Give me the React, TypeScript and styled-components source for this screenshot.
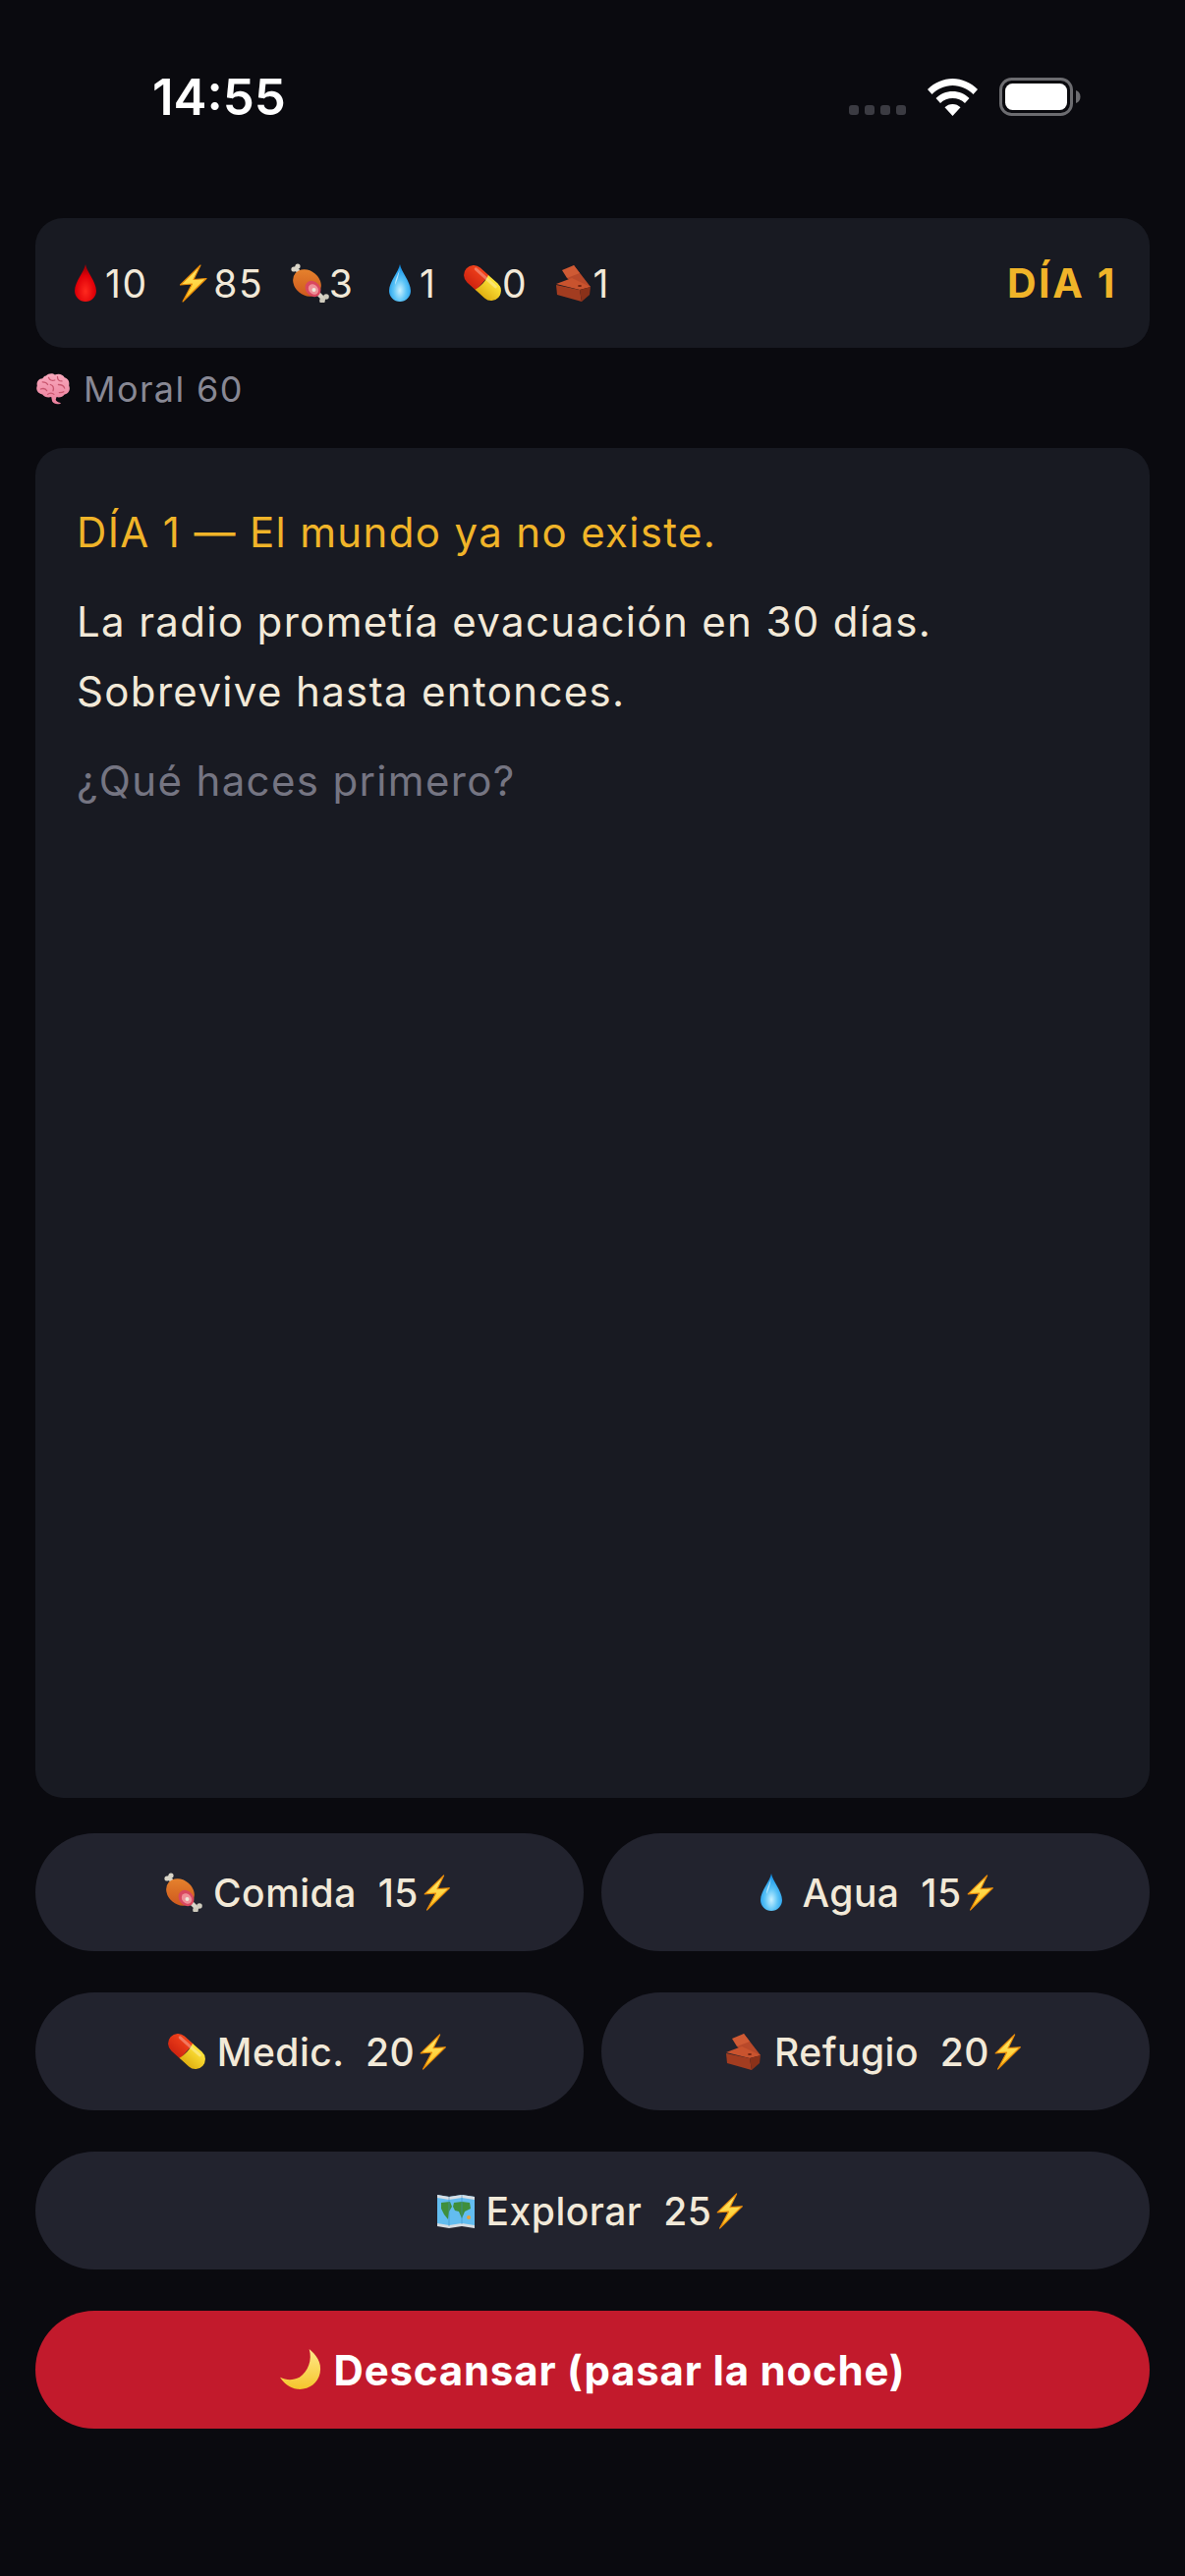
import React, { FC } from 'react';
import styled, { createGlobalStyle } from 'styled-components';

const GlobalStyle = createGlobalStyle`
    * { box-sizing: border-box; }
    html, body { margin: 0; padding: 0; background: #0a0a0f; }
    body { font-family: Inter, "Liberation Sans", sans-serif; }
`;

const Page = styled.div`
    display: flex;
    flex-direction: column;
    width: 1206px;
    height: 2622px;
    padding: 0 36px 150px;
    background: #0a0a0f;
`;

const StatusBar = styled.div`
    display: flex;
    align-items: center;
    justify-content: space-between;
    height: 222px;
    padding: 0 70px 26px 119px;
    flex-shrink: 0;
`;

const Clock = styled.span`
    font-size: 51px;
    font-weight: 600;
    letter-spacing: 0;
    color: #ffffff;
`;

const StatusIcons = styled.div`
    display: flex;
    align-items: flex-end;
`;

const SignalDots = styled.div`
    display: flex;
    gap: 6px;
    margin: 0 22px 1px 0;
`;

const SignalDot = styled.span`
    width: 10px;
    height: 10px;
    border-radius: 3px;
    background: #3b3b42;
`;

const WifiIcon = styled.svg`
    width: 51px;
    height: 38px;
    margin-right: 22px;
`;

const BatteryIcon = styled.svg`
    width: 83px;
    height: 39px;
`;

const StatsCard = styled.div`
    display: flex;
    align-items: center;
    justify-content: space-between;
    flex-shrink: 0;
    height: 132px;
    padding: 0 33px 0 31px;
    background: #181a22;
    border-radius: 28px;
`;

const StatsRow = styled.div`
    display: flex;
    align-items: center;
    gap: 26.5px;
`;

const Stat = styled.span`
    display: inline-flex;
    align-items: center;
    font-size: 39px;
    letter-spacing: 1.6px;
    color: #f2e9d8;
`;

const DayBadge = styled.span`
    font-size: 41px;
    font-weight: 700;
    letter-spacing: 2.6px;
    color: #f0b429;
`;

const MoralLine = styled.div`
    display: flex;
    align-items: center;
    gap: 13px;
    height: 102px;
    flex-shrink: 0;
    padding-bottom: 18px;
    font-size: 36px;
    letter-spacing: 1.4px;
    color: #888894;
`;

const StoryCard = styled.div`
    flex: 1;
    padding: 50px 42px;
    margin-bottom: 36px;
    background: #181a22;
    border-radius: 28px;
`;

const StoryLine = styled.p<{ $tone: 'gold' | 'cream' | 'muted' }>`
    margin: 0 0 20px;
    font-size: 42px;
    line-height: 71px;
    letter-spacing: 1.35px;
    color: ${({ $tone }) => ($tone === 'gold' ? '#f0b429' : $tone === 'muted' ? '#757582' : '#f2e9d8')};
`;

const Actions = styled.div`
    display: grid;
    grid-template-columns: 1fr 1fr;
    column-gap: 18px;
    row-gap: 42px;
    flex-shrink: 0;
`;

const ActionButton = styled.button<{ $wide?: boolean; $danger?: boolean }>`
    display: flex;
    align-items: center;
    justify-content: center;
    grid-column: ${({ $wide }) => ($wide ? '1 / -1' : 'auto')};
    height: 120px;
    padding: 0;
    border: none;
    border-radius: 60px;
    background: ${({ $danger }) => ($danger ? '#c21a2c' : '#22232e')};
    color: ${({ $danger }) => ($danger ? '#ffffff' : '#f2e9d8')};
    font-family: inherit;
    font-size: ${({ $danger }) => ($danger ? '42px' : '39px')};
    font-weight: ${({ $danger }) => ($danger ? 700 : 500)};
    letter-spacing: ${({ $danger }) => ($danger ? '0.8px' : '0.5px')};
    white-space: pre;
`;

const EmojiSvg = styled.svg<{ $size: number }>`
    flex-shrink: 0;
    width: ${({ $size }) => $size}px;
    height: ${({ $size }) => $size}px;
`;

const LabelEmoji = styled.span`
    display: inline-flex;
    margin-right: 11px;
`;

const Sprite = styled.svg`
    position: absolute;
    width: 0;
    height: 0;
`;

type EmojiKind = 'blood' | 'bolt' | 'meat' | 'water' | 'pill' | 'brick' | 'brain' | 'map' | 'moon';

const Gradients: FC = () => (
    <Sprite aria-hidden="true">
        <defs>
            <radialGradient id="bloodFill" cx="50%" cy="72%" r="60%">
                <stop offset="0%" stopColor="#ff2a1e" />
                <stop offset="70%" stopColor="#e00008" />
                <stop offset="100%" stopColor="#a80006" />
            </radialGradient>
            <radialGradient id="waterFill" cx="50%" cy="70%" r="65%">
                <stop offset="0%" stopColor="#c8f0ff" />
                <stop offset="45%" stopColor="#5cc4f7" />
                <stop offset="100%" stopColor="#0f8fe6" />
            </radialGradient>
            <linearGradient id="boltFill" x1="0" y1="0" x2="0" y2="1">
                <stop offset="0%" stopColor="#ffec70" />
                <stop offset="100%" stopColor="#ffc21a" />
            </linearGradient>
            <linearGradient id="meatFill" x1="0" y1="0" x2="1" y2="1">
                <stop offset="0%" stopColor="#ea8a30" />
                <stop offset="100%" stopColor="#c9501a" />
            </linearGradient>
            <linearGradient id="pillRed" x1="0" y1="0" x2="0" y2="1">
                <stop offset="0%" stopColor="#f4441c" />
                <stop offset="100%" stopColor="#cf2410" />
            </linearGradient>
            <linearGradient id="pillYellow" x1="0" y1="0" x2="0" y2="1">
                <stop offset="0%" stopColor="#ffe53a" />
                <stop offset="100%" stopColor="#e0b012" />
            </linearGradient>
            <linearGradient id="moonFill" x1="0" y1="0" x2="0" y2="1">
                <stop offset="0%" stopColor="#ffe98a" />
                <stop offset="100%" stopColor="#f5c52c" />
            </linearGradient>
            <linearGradient id="brainFill" x1="0" y1="0" x2="0" y2="1">
                <stop offset="0%" stopColor="#f9a9bd" />
                <stop offset="100%" stopColor="#ea7f9c" />
            </linearGradient>
        </defs>
    </Sprite>
);

const emojiShapes: Record<EmojiKind, React.ReactNode> = {
    blood: <path d="M20 1C21 8 31 19 31 28a11 11 0 0 1-22 0C9 19 19 8 20 1z" fill="url(#bloodFill)" />,
    water: (
        <>
            <path d="M20 1C21 8 31 19 31 28a11 11 0 0 1-22 0C9 19 19 8 20 1z" fill="url(#waterFill)" />
            <path d="M20 5c-1 5-5 11-5 17 2-4 4-10 5-17z" fill="#d8f4ff" opacity="0.8" />
        </>
    ),
    bolt: (
        <path
            d="M27 2 6.500 22 18.500 21 9 39 33 15.500 20 16.500z"
            fill="url(#boltFill)"
            stroke="#e88a08"
            strokeWidth="1.2"
            strokeLinejoin="round"
        />
    ),
    meat: (
        <>
            <path d="M28 30 34 36" stroke="#d9d5c8" strokeWidth="4.500" strokeLinecap="round" />
            <circle cx="37" cy="34" r="2.800" fill="#cfcbbd" />
            <circle cx="33" cy="38" r="2.800" fill="#cfcbbd" />
            <path d="M10 10 6 5" stroke="#d9d5c8" strokeWidth="4" strokeLinecap="round" />
            <circle cx="4" cy="6" r="2.600" fill="#d9d5c8" />
            <circle cx="8" cy="3" r="2.600" fill="#d9d5c8" />
            <ellipse cx="17.500" cy="20" rx="15.500" ry="12.500" transform="rotate(40 17.500 20)" fill="url(#meatFill)" />
            <ellipse cx="23.500" cy="26" rx="7.200" ry="8.800" transform="rotate(-42 23.500 26)" fill="#d9475f" />
            <ellipse cx="24" cy="26.500" rx="4.600" ry="5.800" transform="rotate(-42 24 26.500)" fill="#ef9098" />
            <circle cx="24.500" cy="27" r="2" fill="#eee8d8" />
        </>
    ),
    pill: (
        <g transform="rotate(42 20 20)">
            <path d="M20 10H8a10 10 0 0 0 0 20h12z" fill="url(#pillRed)" />
            <path d="M19 10h13a10 10 0 0 1 0 20H19c2-6 2-14 0-20z" fill="url(#pillYellow)" />
            <rect x="4" y="12.500" width="30" height="3" rx="1.500" fill="#ffffff" opacity="0.3" />
        </g>
    ),
    brick: (
        <>
            <path d="M20 2 37 24 26 26 13 15z" fill="#b8492a" />
            <path d="M8 7 20 2 26 10 13 15z" fill="#cf5a34" />
            <path d="M2 21 18 15 37 24 26 27z" fill="#c9532e" />
            <path d="M2 22 26 27 28 39 3 32z" fill="#a23c20" />
            <path d="M26 27 37 24 36 32 28 39z" fill="#8a3119" />
            <ellipse cx="26" cy="23" rx="2" ry="1" fill="#6e2412" />
        </>
    ),
    brain: (
        <>
            <path
                d="M12 5c3-3 8-3 10-1 4-2 9-1 11 3 4 1 6 5 5 9 2 4 0 9-5 10-2 3-6 4-9 3l-1 3c1 3 4 3 6 4-4 2-8 1-10-2l-1-5c-4 1-8 0-10-3-5-1-8-5-6-10-1-4 2-8 6-8 1-1 2-3 4-3z"
                fill="url(#brainFill)"
            />
            <path
                d="M8 12c3 0 5 1 6 3M15 7c1 3 4 4 7 3M25 6c0 3 2 5 5 5M6 20c3-1 6 0 7 2M17 15c3 1 4 4 3 7M26 15c3 0 6 1 7 4M14 26c2-2 5-2 7 0M27 24c2 0 4 0 5-1"
                fill="none"
                stroke="#c9566f"
                strokeWidth="1.400"
                strokeLinecap="round"
            />
        </>
    ),
    map: (
        <>
            <path d="M1 4l12 2 13-2 13 2v30l-13-2-13 2-12-2z" fill="#63bdf0" />
            <path d="M1 4l12 2 13-2 13 2v3L26 7 13 9 1 7z" fill="#d7dde2" />
            <path d="M1 33l12 2 13-2 13 2v3l-13-2-13 2-12-2z" fill="#d7dde2" />
            <path d="M5 12l9-1 2 5-3 5-1 8-4-5-3-6zM18 12l8-1 8 1 1 6-6 3-3 7-3-7-4-1-2-4z" fill="#3f8f3c" />
            <path d="M13 6v30M26 4v30" stroke="#3d8fc4" strokeWidth="0.800" opacity="0.7" />
            <circle cx="33" cy="27" r="2" fill="#e8a23c" />
        </>
    ),
    moon: (
        <path
            d="M27 1c6 5 12 12 10 22-2 10-11 16-21 15C9 37 3 32 0 27c6 3 12 3 18 0 8-5 12-16 9-26z"
            fill="url(#moonFill)"
        />
    ),
};

const Emoji: FC<{ kind: EmojiKind; size?: number }> = ({ kind, size = 40 }) => (
    <EmojiSvg $size={size} viewBox="0 0 40 40">
        {emojiShapes[kind]}
    </EmojiSvg>
);

const stats: { kind: EmojiKind; value: number }[] = [
    { kind: 'blood', value: 10 },
    { kind: 'bolt', value: 85 },
    { kind: 'meat', value: 3 },
    { kind: 'water', value: 1 },
    { kind: 'pill', value: 0 },
    { kind: 'brick', value: 1 },
];

const actions: { kind: EmojiKind; label: string; cost: number; wide?: boolean }[] = [
    { kind: 'meat', label: 'Comida', cost: 15 },
    { kind: 'water', label: 'Agua', cost: 15 },
    { kind: 'pill', label: 'Medic.', cost: 20 },
    { kind: 'brick', label: 'Refugio', cost: 20 },
    { kind: 'map', label: 'Explorar', cost: 25, wide: true },
];

export default function App() {
    return (
        <Page>
            <GlobalStyle />
            <Gradients />

            <StatusBar>
                <Clock>14:55</Clock>
                <StatusIcons>
                    <SignalDots>
                        <SignalDot />
                        <SignalDot />
                        <SignalDot />
                        <SignalDot />
                    </SignalDots>
                    <WifiIcon viewBox="0 0 51 38">
                        <path
                            d="M25.500 0C35 0 44 4 51 11l-4.500 5C41 10.500 33.500 7 25.500 7S10 10.500 4.500 16L0 11C7 4 16 0 25.500 0z"
                            fill="#fff"
                        />
                        <path
                            d="M25.500 13c6.500 0 12.500 2.500 17 7l-4.500 5c-3.300-3.200-7.800-5-12.500-5s-9.200 1.800-12.500 5l-4.500-5c4.500-4.500 10.500-7 17-7z"
                            fill="#fff"
                        />
                        <path d="M25.500 26c3 0 6 1.200 8 3.300L25.500 38l-8-8.700c2-2.100 5-3.300 8-3.300z" fill="#fff" />
                    </WifiIcon>
                    <BatteryIcon viewBox="0 0 83 39">
                        <rect x="1.500" y="1.500" width="72" height="36" rx="11" fill="none" stroke="#6c6c70" strokeWidth="3" />
                        <rect x="6" y="6" width="63" height="27" rx="7.500" fill="#fff" />
                        <path d="M78 13c3 1 4.500 3.500 4.500 6.500S81 25 78 26z" fill="#6c6c70" />
                    </BatteryIcon>
                </StatusIcons>
            </StatusBar>

            <StatsCard>
                <StatsRow>
                    {stats.map(({ kind, value }) => (
                        <Stat key={kind}>
                            <Emoji kind={kind} />
                            {value}
                        </Stat>
                    ))}
                </StatsRow>
                <DayBadge>DÍA 1</DayBadge>
            </StatsCard>

            <MoralLine>
                <Emoji kind="brain" size={36} />
                Moral 60
            </MoralLine>

            <StoryCard>
                <StoryLine $tone="gold">DÍA 1 — El mundo ya no existe.</StoryLine>
                <StoryLine $tone="cream">
                    La radio prometía evacuación en 30 días.
                    <br />
                    Sobrevive hasta entonces.
                </StoryLine>
                <StoryLine $tone="muted">¿Qué haces primero?</StoryLine>
            </StoryCard>

            <Actions>
                {actions.map(({ kind, label, cost, wide }) => (
                    <ActionButton key={label} $wide={wide}>
                        <LabelEmoji>
                            <Emoji kind={kind} />
                        </LabelEmoji>
                        {label}  {cost}
                        <Emoji kind="bolt" size={38} />
                    </ActionButton>
                ))}
                <ActionButton $wide $danger>
                    <LabelEmoji>
                        <Emoji kind="moon" size={44} />
                    </LabelEmoji>
                    Descansar (pasar la noche)
                </ActionButton>
            </Actions>
        </Page>
    );
}
